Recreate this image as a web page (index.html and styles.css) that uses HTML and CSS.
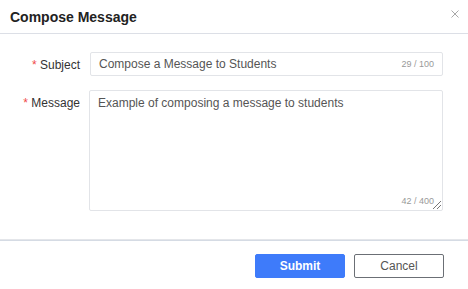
FILE: index.html
```html
<!DOCTYPE html>
<html lang="en">
<head>
  <meta charset="UTF-8" />
  <title>Compose Message</title>
  <link rel="stylesheet" href="styles.css">
</head>
<body>
  <div class="dialog">
    <header class="dialog-header">
      <h2>Compose Message</h2>
      <svg class="close" width="8" height="8" viewBox="0 0 8 8">
        <path d="M0.5 0.5 L7.5 7.5 M7.5 0.5 L0.5 7.5" stroke="#a8a8a8" stroke-width="1" fill="none" />
      </svg>
    </header>

    <form class="dialog-body">
      <div class="row">
        <label><span class="req">*</span> Subject</label>
        <div class="field input">
          <span class="value">Compose a Message to Students</span>
          <span class="count">29 / 100</span>
        </div>
      </div>
      <div class="row">
        <label><span class="req">*</span> Message</label>
        <div class="field textarea">
          <span class="value">Example of composing a message to students</span>
          <span class="count">42 / 400</span>
          <span class="grip"></span>
        </div>
      </div>
    </form>

    <footer class="dialog-footer">
      <button type="button" class="btn primary">Submit</button>
      <button type="button" class="btn">Cancel</button>
    </footer>
  </div>
</body>
</html>
```

FILE: styles.css
```css
body {
  margin: 0;
  background: #fff;
  font-family: 'Liberation Sans', Arial, sans-serif;
  color: #333;
}
.dialog {
  width: 468px;
  height: 289px;
  background: #fff;
}
.dialog-header {
  display: flex;
  justify-content: space-between;
  align-items: center;
  height: 33px;
  padding: 0 9px 0 10px;
  border-bottom: 1px solid #dcdfe6;
}
.dialog-header h2 {
  margin: 0;
  font-size: 14px;
  font-weight: bold;
  color: #222;
}
.close {
  margin-top: -5px;
}
.dialog-body {
  padding: 18px 25px 0 0;
  height: 187px;
}
.row {
  display: flex;
  align-items: flex-start;
  margin-bottom: 14px;
}
.row label {
  width: 80px;
  text-align: right;
  font-size: 12px;
  color: #333;
  padding-top: 6px;
  margin-right: 9px;
}
.req {
  color: #f04a4a;
}
.field {
  flex: 1;
  position: relative;
  border: 1px solid #e2e4e8;
  border-radius: 2px;
  font-size: 12px;
  color: #555;
  box-sizing: border-box;
}
.input {
  height: 24px;
  display: flex;
  align-items: center;
  padding: 0 8px;
  margin-left: 1px;
}
.input .value {
  flex: 1;
}
.count {
  font-size: 9px;
  color: #999;
}
.textarea {
  height: 121px;
  padding: 5px 8px;
}
.textarea .count {
  position: absolute;
  right: 8px;
  bottom: 4px;
}
.grip {
  position: absolute;
  right: 1px;
  bottom: 1px;
  width: 8px;
  height: 8px;
  background: linear-gradient(135deg, transparent 45%, #777 45%, #777 55%, transparent 55%, transparent 70%, #777 70%, #777 80%, transparent 80%);
}
.dialog-footer {
  display: flex;
  justify-content: flex-end;
  gap: 9px;
  padding: 14px 24px 0 0;
  border-top: 1px solid #e4e6ea;
  box-shadow: inset 0 1px 0 #d5dbe4;
  margin: 0;
}
.btn {
  width: 90px;
  height: 24px;
  font-family: 'Liberation Sans', Arial, sans-serif;
  font-size: 12px;
  border: 1px solid #6b6f75;
  border-radius: 2px;
  background: #fff;
  color: #555;
  cursor: pointer;
}
.btn.primary {
  background: #3e7bfa;
  border-color: #3e7bfa;
  color: #fff;
  font-weight: bold;
}
```
